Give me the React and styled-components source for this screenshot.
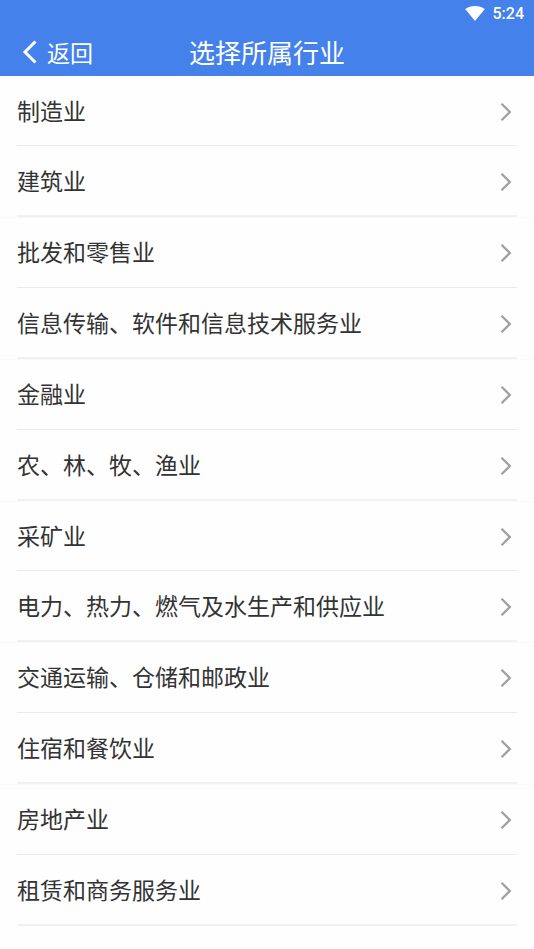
import React from 'react'
import styled, { createGlobalStyle } from 'styled-components'

const GlobalStyle = createGlobalStyle`
  *, *::before, *::after {
    box-sizing: border-box;
  }

  body {
    margin: 0;
    background: #fefefe;
    color: #333;
    font-family: "Noto Sans CJK SC", sans-serif;
  }

  button {
    font: inherit;
    color: inherit;
    background: none;
    border: none;
    margin: 0;
    padding: 0;
    cursor: pointer;
  }
`

const Header = styled.header`
  background: #4481eb;
  color: #fff;
`

const StatusBar = styled.div`
  display: flex;
  align-items: center;
  justify-content: flex-end;
  gap: 8px;
  height: 28px;
  padding: 0 10px;
  font-family: Roboto, sans-serif;
  font-size: 16px;
  font-weight: 500;
  line-height: 28px;
`

const NavBar = styled.div`
  display: grid;
  grid-template-columns: 1fr auto 1fr;
  align-items: center;
  height: 48px;
  padding: 0 22px;
`

const BackButton = styled.button`
  display: flex;
  align-items: center;
  justify-self: start;
  gap: 9px;
  font-size: 23px;
  line-height: 46px;
`

const Title = styled.h1`
  margin: 0;
  font-size: 26px;
  font-weight: 400;
  line-height: 48px;
`

const List = styled.ul`
  list-style: none;
  margin: 0;
  padding: 0;
`

const ItemButton = styled.button`
  display: flex;
  align-items: center;
  justify-content: space-between;
  width: 100%;
  height: 100%;
  padding: 2px 5px 0 0;
  border-bottom: 1px solid #ebebeb;
  font-size: 23px;
  line-height: 34px;
  text-align: left;
`

const Item = styled.li`
  height: 71px;
  padding: 0 17px;

  &:nth-child(6n + 1) {
    height: 70px;
  }

  &:nth-child(even) {
    box-shadow: 0 1px 0 #f9f9f9;
  }

  &:nth-child(even) ${ItemButton} {
    border-bottom: 2px solid #f1f1f1;
  }
`

const ItemName = styled.span`
  padding-bottom: 4px;
`

const industries = [
  '制造业',
  '建筑业',
  '批发和零售业',
  '信息传输、软件和信息技术服务业',
  '金融业',
  '农、林、牧、渔业',
  '采矿业',
  '电力、热力、燃气及水生产和供应业',
  '交通运输、仓储和邮政业',
  '住宿和餐饮业',
  '房地产业',
  '租赁和商务服务业',
]

const WifiIcon = () => (
  <svg width="20" height="16" viewBox="0 0 20 16" fill="#fff" aria-hidden="true">
    <path d="M10 15 0.2 3C3 .9 6.3 0 10 0s7 .9 9.800 3z" />
  </svg>
)

const BackIcon = () => (
  <svg width="16" height="24" viewBox="0 0 16 24" fill="none" stroke="#fff" strokeWidth="3" aria-hidden="true">
    <path d="M13.5 1.5 3 12l10.500 10.500" />
  </svg>
)

const ChevronIcon = () => (
  <svg width="12" height="18" viewBox="0 0 12 18" fill="none" stroke="#a0a0a0" strokeWidth="2.3" aria-hidden="true">
    <path d="M1.500 0.800 9.800 9l-8.300 8.200" />
  </svg>
)

export default function App() {
  return (
    <>
      <GlobalStyle />
      <Header>
        <StatusBar>
          <WifiIcon />
          <time>5:24</time>
        </StatusBar>
        <NavBar>
          <BackButton type="button">
            <BackIcon />
            返回
          </BackButton>
          <Title>选择所属行业</Title>
        </NavBar>
      </Header>
      <main>
        <List>
          {industries.map((name) => (
            <Item key={name}>
              <ItemButton type="button">
                <ItemName>{name}</ItemName>
                <ChevronIcon />
              </ItemButton>
            </Item>
          ))}
        </List>
      </main>
    </>
  )
}
